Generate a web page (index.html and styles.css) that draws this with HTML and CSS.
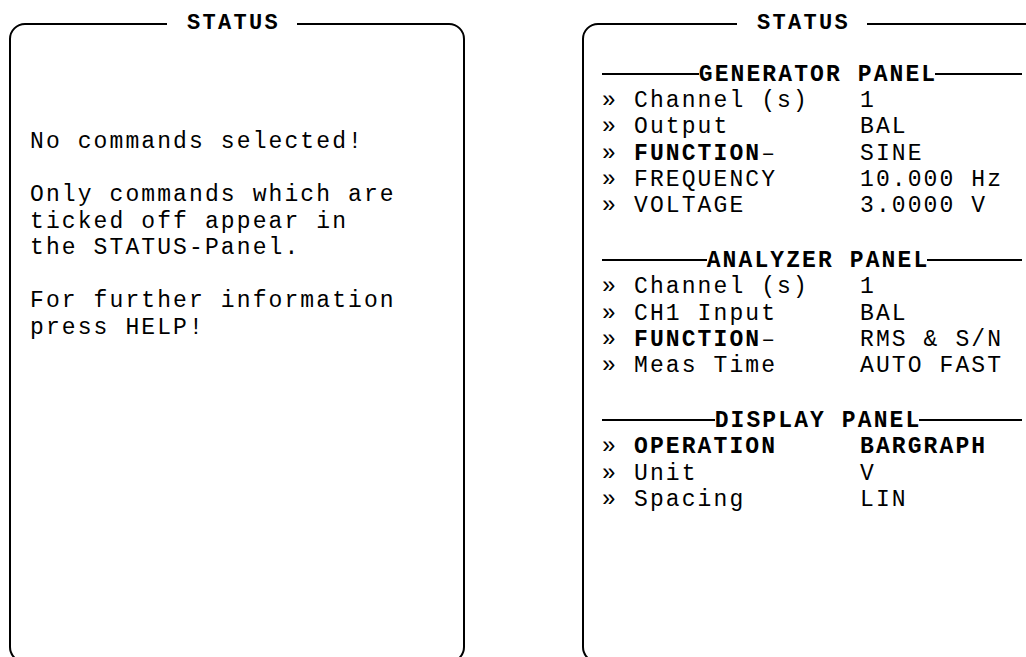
FILE: index.html
```html
<!DOCTYPE html>
<html lang="en">
<head>
    <meta charset="UTF-8">
    <title>Status</title>
    <link rel="stylesheet" href="styles.css">
</head>
<body>
    <div class="screen">
        <section class="panel panel-empty">
            <h2 class="panel-title">STATUS</h2>
            <div class="message">
                <p>No commands selected!</p>
                <p>Only commands which are<br>ticked off appear in<br>the STATUS-Panel.</p>
                <p>For further information<br>press HELP!</p>
            </div>
        </section>

        <section class="panel panel-list">
            <h2 class="panel-title">STATUS</h2>

            <div class="group">
                <h3 class="group-title"><span>GENERATOR PANEL</span></h3>
                <div class="row"><span>»</span><span>Channel (s)</span><span>1</span></div>
                <div class="row"><span>»</span><span>Output</span><span>BAL</span></div>
                <div class="row"><span>»</span><span><b>FUNCTION</b>–</span><span>SINE</span></div>
                <div class="row"><span>»</span><span>FREQUENCY</span><span>10.000 Hz</span></div>
                <div class="row"><span>»</span><span>VOLTAGE</span><span>3.0000 V</span></div>
            </div>

            <div class="group">
                <h3 class="group-title"><span>ANALYZER PANEL</span></h3>
                <div class="row"><span>»</span><span>Channel (s)</span><span>1</span></div>
                <div class="row"><span>»</span><span>CH1 Input</span><span>BAL</span></div>
                <div class="row"><span>»</span><span><b>FUNCTION</b>–</span><span>RMS &amp; S/N</span></div>
                <div class="row"><span>»</span><span>Meas Time</span><span>AUTO FAST</span></div>
            </div>

            <div class="group">
                <h3 class="group-title"><span>DISPLAY PANEL</span></h3>
                <div class="row"><span>»</span><span><b>OPERATION</b></span><span><b>BARGRAPH</b></span></div>
                <div class="row"><span>»</span><span>Unit</span><span>V</span></div>
                <div class="row"><span>»</span><span>Spacing</span><span>LIN</span></div>
            </div>
        </section>
    </div>
</body>
</html>
```

FILE: styles.css
```css
html, body { margin: 0; height: 657px; overflow: hidden; background: #fff; }
body { font-family: "Courier New", "Liberation Mono", monospace; color: #000; font-size: 23px; letter-spacing: 2.1px; }

.screen { display: flex; gap: 117px; padding: 23px 0 0 9px; }

.panel { flex: none; box-sizing: border-box; height: 640px; border: 2px solid #000; border-radius: 16px; }
.panel-empty { width: 456px; padding-left: 19px; }
.panel-list { width: 480px; padding-left: 18px; }

.panel-title { width: fit-content; margin: -15px 0 0 137px; padding: 0 17px 0 20px; background: #fff; font-size: 22px; letter-spacing: 2.3px; line-height: 28px; font-weight: bold; }
.panel-list .panel-title { margin-left: 135px; }

.message { margin-top: 91px; line-height: 26.5px; }
.message p { margin: 0 0 26.5px; }

.group { width: 420px; margin-bottom: 29px; line-height: 26.2px; }
.group:first-of-type { margin-top: 24px; }
.group-title { display: flex; align-items: center; margin: 0; font-size: inherit; }
.group-title span { margin-right: -2px; }
.group-title::before, .group-title::after { content: ""; border-top: 2px solid #000; margin-bottom: 3px; }
.group-title::before { flex: 1 1 10px; }
.group-title::after { flex: 1 1 0; }

.row { display: grid; grid-template-columns: 32px 226px auto; white-space: pre; }
```
